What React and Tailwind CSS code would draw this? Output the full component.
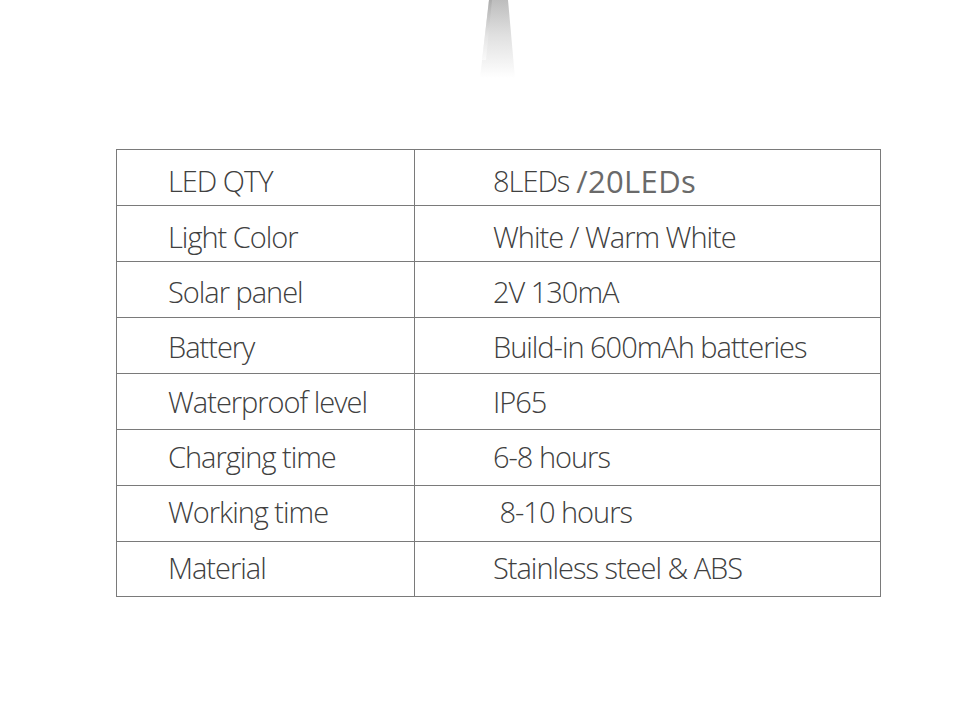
const specs = [
  { label: 'LED QTY', value: null, pad: 'pt-[7px]' },
  { label: 'Light Color', value: 'White / Warm White', pad: 'pt-[7px]' },
  { label: 'Solar panel', value: '2V 130mA', pad: 'pt-[5px]' },
  { label: 'Battery', value: 'Build-in 600mAh batteries', pad: 'pt-[3px]' },
  { label: 'Waterproof level', value: 'IP65', pad: 'pt-[1px]' },
  { label: 'Charging time', value: '6-8 hours', pad: 'pb-[1px]' },
  { label: 'Working time', value: '\u00a08-10 hours', pad: 'pb-[3px]' },
  { label: 'Material', value: 'Stainless steel & ABS', pad: 'pb-[2px]' },
]

export default function App() {
  return (
    <div className="w-[960px] h-[713px] bg-white overflow-hidden" style={{ fontFamily: '"Open Sans", sans-serif' }}>
      {/* light beam at top */}
      <div className="flex h-[149px] flex-col">
        <svg width="960" height="80" className="shrink-0">
          <defs>
            <linearGradient id="beam" x1="0" y1="0" x2="0" y2="1">
              <stop offset="0" stopColor="#bdbdbd" />
              <stop offset="0.45" stopColor="#e0e0e0" />
              <stop offset="1" stopColor="#ffffff" />
            </linearGradient>
            <linearGradient id="edge" x1="0" y1="0" x2="0" y2="1">
              <stop offset="0" stopColor="#a0a0a0" />
              <stop offset="0.6" stopColor="#e8e8e8" />
              <stop offset="1" stopColor="#ffffff" />
            </linearGradient>
          </defs>
          <polygon points="489,0 508,0 515,78 480,78" fill="url(#beam)" />
          <polygon points="489,0 492,0 486,60 482,60" fill="url(#edge)" opacity="0.6" />
        </svg>
      </div>

      {/* spec table */}
      <div className="ml-[116px] w-[765px] border border-[#7a7a7a]">
        {specs.map(({ label, value, pad }, i) => {
          const last = i === specs.length - 1
          return (
            <div
              key={label}
              className={`grid grid-cols-[298px_1fr] ${last ? 'h-[54px]' : 'h-[56px] border-b border-[#7a7a7a]'}`}
            >
              <div className={`flex items-center pl-[51px] ${pad} border-r border-[#7a7a7a] text-[29px] font-light tracking-[-0.035em] text-[#404040]`}>
                {label}
              </div>
              <div className={`flex items-center pl-[78px] ${pad} text-[29px] font-light tracking-[-0.035em] text-[#404040] whitespace-pre`}>
                {value ?? (
                  <>
                    8LEDs
                    <span className="ml-[7px] font-normal tracking-[0.01em] text-[31px] text-[#6a6a6a]">/20LEDs</span>
                  </>
                )}
              </div>
            </div>
          )
        })}
      </div>
    </div>
  )
}
